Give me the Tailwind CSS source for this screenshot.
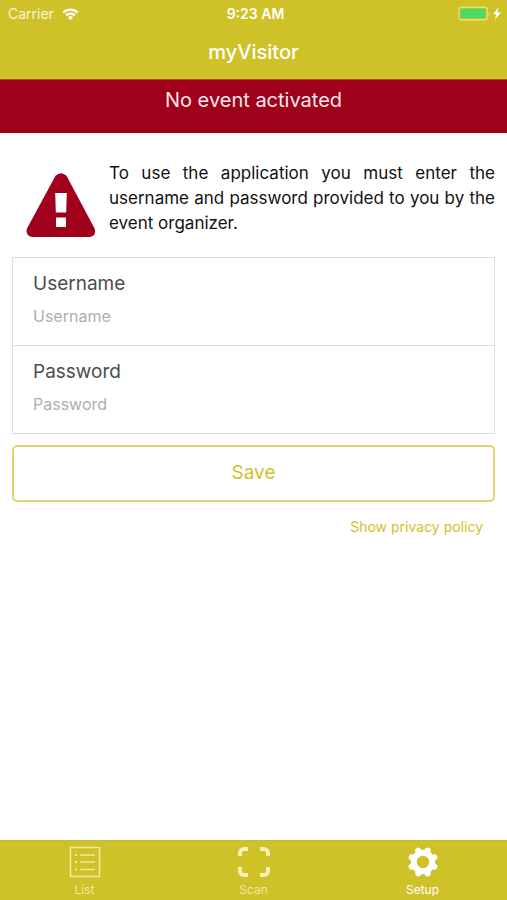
<!DOCTYPE html>
<html lang="en">
<head>
<meta charset="utf-8">
<meta name="viewport" content="width=device-width, initial-scale=1">
<title>myVisitor</title>
<script src="https://cdn.jsdelivr.net/npm/@tailwindcss/browser@4"></script>
</head>
<body class="flex min-h-screen flex-col bg-white font-['Inter','Liberation_Sans',sans-serif] text-black">
  <header class="bg-[#cfc229] text-white">
    <div class="grid h-7 grid-cols-3 items-center pr-1 pl-2 text-[14px] leading-4">
      <div class="flex items-center gap-2">
        <span class="text-[#f9f6dc]">Carrier</span>
        <svg class="h-3 w-[17px]" viewBox="0 0 16 12" fill="none" stroke="currentColor" stroke-width="2.2" aria-hidden="true">
          <path d="M.8 4.600a10.200 10.200 0 0 1 14.400 0"/>
          <path d="M3.500 7.400a6.400 6.400 0 0 1 9 0"/>
          <path d="M8 12 5.400 9.400a3.700 3.700 0 0 1 5.200 0Z" fill="currentColor" stroke="none"/>
        </svg>
      </div>
      <div class="text-center font-semibold whitespace-nowrap">9:23 AM</div>
      <svg class="h-4 w-[45px] justify-self-end" viewBox="0 0 45 16" aria-hidden="true">
        <rect x=".75" y="1.250" width="28.500" height="12.500" rx="2.500" fill="none" stroke="#e9dd7c" stroke-width="1.300"/>
        <rect x="2.500" y="2.700" width="25" height="9.600" rx="1" fill="#4cd964"/>
        <path d="M30.500 5.500v4c1.600-.8 1.600-3.200 0-4Z" fill="#e9dd7c"/>
        <path d="M40.500 1.500 35 8.300h3.200L37 13.500l6-7h-3.500Z" fill="#fff"/>
      </svg>
    </div>
    <h1 class="flex h-[51px] items-center justify-center pb-1 text-xl leading-6 font-medium">myVisitor</h1>
  </header>
  <div class="h-[54px] border-t border-[#a8501c] bg-[#9f001b] pt-2 text-center text-xl leading-6 text-[#fbe9ec]">No event activated</div>

  <main class="flex-1 px-3 pt-7">
    <section class="flex gap-3">
      <svg class="mt-3 ml-3 h-16 w-[73px] shrink-0" viewBox="0 0 73 64" aria-hidden="true">
        <path d="M31.500 2.800Q37 -2.200 42.500 2.800L70.600 55.500Q72.500 62.800 66 64H8Q1.200 62.800 3 55.500Z" fill="#a0001c"/>
        <path d="M31.200 20h11.600l-.6 19.500H31.800ZM32 44.500h10v9.500H32Z" fill="#fff"/>
      </svg>
      <p class="flex-1 text-justify text-[17px] leading-[25px] text-[#111]">To use the application you must enter the username and password provided to you by the event organizer.</p>
    </section>

    <form>
      <div class="mt-5 border border-[#dedede]">
        <div class="flex h-[88px] flex-col border-b border-[#dedede] px-5 pt-3">
          <label for="username" class="text-[19px] leading-7 text-[#4d4d4d]">Username</label>
          <input id="username" type="text" placeholder="Username" class="mt-0.5 h-8 w-full text-base outline-none placeholder:text-[#aeaeae]">
        </div>
        <div class="flex h-[87px] flex-col px-5 pt-3">
          <label for="password" class="text-[19px] leading-7 text-[#4d4d4d]">Password</label>
          <input id="password" type="password" placeholder="Password" class="mt-0.5 h-8 w-full text-base outline-none placeholder:text-[#aeaeae]">
        </div>
      </div>
      <button type="submit" class="mt-[11px] h-[57px] w-full rounded-[5px] border-2 border-[#dfd673] text-[19px] text-[#cfc229]">Save</button>
    </form>
    <div class="mt-4 mr-3 text-right text-[14px] leading-[18px] text-[#cfc229]"><a href="#privacy">Show privacy policy</a></div>
  </main>

  <nav class="grid h-[60px] grid-cols-3 border-t border-[#c3b740] bg-[#cfc229] text-[12px] leading-4 text-[#f0e7a0]">
    <a href="#list" class="flex flex-col items-center pt-[5px]">
      <svg class="h-8 w-8" viewBox="0 0 32 32" fill="none" stroke="currentColor" aria-hidden="true">
        <rect x="1.500" y="1.500" width="29" height="29" stroke-width="1.500"/>
        <path d="M11 9h15M11 16h15M11 23.500h15" stroke-width="1.500"/>
        <path d="M6 9h2M6 16h2M6 23.500h2" stroke-width="2"/>
      </svg>
      <span class="mt-1">List</span>
    </a>
    <a href="#scan" class="flex flex-col items-center pt-[5px]">
      <svg class="h-8 w-8" viewBox="0 0 32 32" fill="none" stroke="#f6efb8" stroke-width="4" aria-hidden="true">
        <path d="M2 10V7a4 4 0 0 1 4-4h4M22 3h4a4 4 0 0 1 4 4v3M30 21v4a4 4 0 0 1-4 4h-4M10 29H6a4 4 0 0 1-4-4v-4"/>
      </svg>
      <span class="mt-1">Scan</span>
    </a>
    <a href="#setup" class="flex flex-col items-center pt-[5px] text-white" aria-current="page">
      <svg class="h-8 w-8" viewBox="-16 -16 32 32" fill="none" stroke="currentColor" aria-hidden="true">
        <circle r="9.200" stroke-width="6"/>
        <path stroke-width="6" stroke-linecap="round" d="M4.400-10.600 4.700-11.400M10.600-4.400 11.400-4.700M10.600 4.400 11.400 4.700M4.400 10.600 4.700 11.400M-4.400 10.600-4.700 11.400M-10.600 4.400-11.400 4.700M-10.600-4.400-11.400-4.700M-4.400-10.600-4.700-11.400"/>
      </svg>
      <span class="mt-1">Setup</span>
    </a>
  </nav>
</body>
</html>
